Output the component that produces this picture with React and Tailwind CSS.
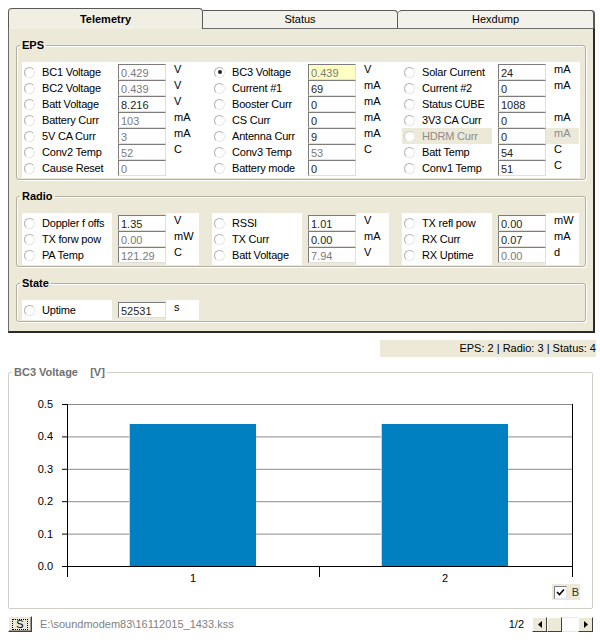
import React from "react";

const eps = [
  [
    { l: "BC1 Voltage", v: "0.429", u: "V" },
    { l: "BC2 Voltage", v: "0.439", u: "V" },
    { l: "Batt Voltage", v: "8.216", u: "V", d: true },
    { l: "Battery Curr", v: "103", u: "mA" },
    { l: "5V CA Curr", v: "3", u: "mA" },
    { l: "Conv2 Temp", v: "52", u: "C" },
    { l: "Cause Reset", v: "0", u: "" },
  ],
  [
    { l: "BC3 Voltage", v: "0.439", u: "V", checked: true, yellow: true },
    { l: "Current #1", v: "69", u: "mA", d: true },
    { l: "Booster Curr", v: "0", u: "mA", d: true },
    { l: "CS Curr", v: "0", u: "mA", d: true },
    { l: "Antenna Curr", v: "9", u: "mA", d: true },
    { l: "Conv3 Temp", v: "53", u: "C" },
    { l: "Battery mode", v: "0", u: "", d: true },
  ],
  [
    { l: "Solar Current", v: "24", u: "mA", d: true },
    { l: "Current #2", v: "0", u: "mA", d: true },
    { l: "Status CUBE", v: "1088", u: "", d: true },
    { l: "3V3 CA Curr", v: "0", u: "mA", d: true },
    { l: "HDRM Curr", v: "0", u: "mA", d: true, dis: true },
    { l: "Batt Temp", v: "54", u: "C", d: true },
    { l: "Conv1 Temp", v: "51", u: "C", d: true },
  ],
];

const radio = [
  [
    { l: "Doppler f offs", v: "1.35", u: "V", d: true },
    { l: "TX forw pow", v: "0.00", u: "mW" },
    { l: "PA Temp", v: "121.29", u: "C" },
  ],
  [
    { l: "RSSI", v: "1.01", u: "V", d: true },
    { l: "TX Curr", v: "0.00", u: "mA", d: true },
    { l: "Batt Voltage", v: "7.94", u: "V" },
  ],
  [
    { l: "TX refl pow", v: "0.00", u: "mW", d: true },
    { l: "RX Curr", v: "0.07", u: "mA", d: true },
    { l: "RX Uptime", v: "0.00", u: "d" },
  ],
];

const state = [[{ l: "Uptime", v: "52531", u: "s", d: true }]];

function Radio({ checked, dis }) {
  return (
    <span
      className={
        "w-[11px] h-[11px] rounded-full border bg-white shrink-0 flex items-center justify-center " +
        (dis
          ? "border-[#cdcdc4] border-r-[#ecebe4] border-b-[#ecebe4]"
          : "border-[#b0b0b0] border-r-[#e8e8e8] border-b-[#e8e8e8]")
      }
    >
      {checked && <span className="w-[4px] h-[4px] rounded-full bg-[#202020]" />}
    </span>
  );
}

function Col({ rows, blocks }) {
  return (
    <div className="flex w-[177px]">
      <div className={"w-[90px] flex flex-col py-[2px] " + (blocks ? "bg-white" : "")}>
        {rows.map((r, i) => (
          <div
            key={i}
            className={
              "h-[16px] flex items-center gap-[7px] pl-[2px] " +
              (r.dis ? "bg-[#ece9d8] text-[#8c8c8c]" : "text-black")
            }
          >
            <Radio checked={r.checked} dis={r.dis} />
            <span className="text-[11px] leading-[13px] tracking-[-0.2px] whitespace-nowrap">{r.l}</span>
          </div>
        ))}
      </div>
      <div className="w-[6px]" />
      <div className="w-[48px] flex flex-col py-[2px]">
        {rows.map((r, i) => (
          <div
            key={i}
            className={
              "h-[16px] w-[48px] border border-t-[#7c7c7c] border-l-[#7c7c7c] border-r-[#e2e0d6] border-b-[#e2e0d6] pl-[2px] pt-[2px] text-[11px] leading-[13px] overflow-hidden " +
              (r.yellow ? "bg-[#ffffc4] " : "bg-white ") +
              (r.d ? "text-[#1e1e1e]" : "text-[#7a7a7a]")
            }
          >
            {r.v}
          </div>
        ))}
      </div>
      <div className={"w-[33px] flex flex-col py-[2px] " + (blocks ? "bg-white" : "")}>
        {rows.map((r, i) => (
          <div
            key={i}
            className={
              "h-[16px] pl-[8px] text-[11px] leading-[10px] " +
              (r.dis ? "bg-[#ece9d8] text-[#8c8c8c]" : "text-black")
            }
          >
            {r.u}
          </div>
        ))}
      </div>
    </div>
  );
}

function Group({ title, children, className = "" }) {
  return (
    <fieldset
      className={
        "mx-[7px] border border-[#b2b0a2] rounded-[3px] shadow-[inset_1px_1px_0_#ffffff,1px_1px_0_#ffffff] pl-[5px] pr-[5px] pt-[10px] pb-[1px] " +
        className
      }
    >
      <legend className="ml-[-2px] px-[2px] text-[11px] leading-[13px] font-bold text-black">{title}</legend>
      {children}
    </fieldset>
  );
}

function Chart() {
  const gy = [25, 57.4, 89.8, 122.2, 154.6, 187];
  const labels = ["0.5", "0.4", "0.3", "0.2", "0.1", "0.0"];
  return (
    <svg width="583" height="205" className="block" fontFamily="Liberation Sans, Arial, sans-serif" fontSize="11">
      {gy.slice(0, 5).map((y, i) => (
        <line key={i} x1="58" x2="563" y1={y + 0.5} y2={y + 0.5} stroke="#8a8a8a" strokeWidth="1" />
      ))}
      <rect x="120" y="45" width="127" height="142" fill="#0080c0" />
      <line x1="120.5" x2="120.5" y1="45" y2="187" stroke="#b8dcef" />
      <rect x="372" y="45" width="127" height="142" fill="#0080c0" />
      <line x1="372.5" x2="372.5" y1="45" y2="187" stroke="#b8dcef" />
      <line x1="58" x2="564" y1="187.5" y2="187.5" stroke="#000" />
      <line x1="58.5" x2="58.5" y1="25" y2="198" stroke="#000" />
      <line x1="563.5" x2="563.5" y1="25" y2="198" stroke="#000" />
      <line x1="310.5" x2="310.5" y1="187" y2="198" stroke="#000" />
      {gy.map((y, i) => (
        <g key={i}>
          <line x1="53" x2="58" y1={y + 0.5} y2={y + 0.5} stroke="#000" />
          <text x="44" y={y + 4} textAnchor="end" fill="#000">
            {labels[i]}
          </text>
        </g>
      ))}
      <text x="184" y="203" textAnchor="middle" fill="#000">1</text>
      <text x="436" y="203" textAnchor="middle" fill="#000">2</text>
    </svg>
  );
}

export default function App() {
  return (
    <div className="w-[600px] h-[640px] bg-white pt-[8px] font-['Liberation_Sans',Arial,sans-serif] text-[11px] overflow-hidden">
      {/* Tab control */}
      <div className="ml-[8px] w-[587px]">
        <div className="flex h-[20px] items-end relative z-10">
          <div className="w-[195px] h-[21px] mb-[-1px] bg-[#f1efe4] border border-b-0 border-[#5a5a5a] rounded-t-[4px] flex items-center justify-center font-bold text-[11px] text-black">
            Telemetry
          </div>
          <div className="w-[195px] h-[18px] bg-[#f3f2ea] border border-b-0 border-l-0 border-[#5a5a5a] rounded-tr-[4px] flex items-center justify-center text-[11px] text-black">
            Status
          </div>
          <div className="w-[197px] h-[18px] bg-[#f3f2ea] border border-b-0 border-l-0 border-r-2 border-[#5a5a5a] rounded-t-[4px] flex items-center justify-center text-[11px] text-black">
            Hexdump
          </div>
        </div>
        <div className="bg-[#ece9d8] border-l border-t border-[#6c6c6c] border-r-2 border-r-[#2a2a2a] border-b-2 border-b-[#2a2a2a] pt-[10px] pb-[9px]">
          <Group title="EPS">
            <div className="bg-white flex gap-[13px]">
              {eps.map((c, i) => (
                <Col key={i} rows={c} />
              ))}
            </div>
          </Group>
          <Group title="Radio" className="mt-[10px]">
            <div className="flex gap-[13px]">
              {radio.map((c, i) => (
                <Col key={i} rows={c} blocks />
              ))}
            </div>
          </Group>
          <Group title="State" className="mt-[10px]">
            <div className="flex gap-[13px]">
              {state.map((c, i) => (
                <Col key={i} rows={c} blocks />
              ))}
            </div>
          </Group>
        </div>
      </div>

      {/* Status strip */}
      <div className="mt-[7px] ml-[380px] w-[216px] h-[17px] bg-[#ece9d8] flex items-center justify-end text-[11px] text-black whitespace-nowrap">
        EPS: 2 | Radio: 3 | Status: 4
      </div>

      {/* Chart */}
      <fieldset className="mt-[9px] ml-[8px] w-[585px] border border-[#cfcfc6] rounded-[2px] pb-[8px]">
        <legend className="ml-[3px] px-[2px] text-[11px] leading-[13px] font-bold text-[#707070] whitespace-pre">
          {"BC3 Voltage    [V]"}
        </legend>
        <Chart />
        <div className="flex justify-end pr-[12px] h-[16px]">
          <div className="bg-[#ece9d8] flex items-center gap-[5px] pl-[2px] pr-[1px] h-[16px]">
            <span className="w-[13px] h-[13px] border border-[#7c7c7c] border-r-[#e4e4e4] border-b-[#e4e4e4] bg-white flex items-center justify-center">
              <svg width="9" height="9" viewBox="0 0 9 9">
                <path d="M1 4 L3.5 6.5 L8 1.5" fill="none" stroke="#000" strokeWidth="1.6" />
              </svg>
            </span>
            <span className="text-[11px] leading-[13px] text-[#333]">B</span>
          </div>
        </div>
      </fieldset>

      {/* Bottom bar */}
      <div className="mt-[7px] ml-[8px] w-[585px] h-[16px] flex items-center">
        <div className="w-[24px] h-[16px] bg-[#ece9d8] border border-[#ffffff] border-r-[#404040] border-b-[#404040] shadow-[inset_-1px_-1px_0_#9c9a90] flex items-center justify-center">
          <span className="border border-dotted border-[#000] px-[3px] leading-[9px] text-[11px] text-black">S</span>
        </div>
        <span className="ml-[8px] text-[11px] text-[#7f7f7f]">E:\soundmodem83\16112015_1433.kss</span>
        <span className="ml-auto text-[11px] text-black">1/2</span>
        <div className="ml-[8px] flex h-[15px]">
          <div className="w-[15px] h-[15px] bg-[#ece9d8] border border-white border-r-[#404040] border-b-[#404040] flex items-center justify-center">
            <svg width="4" height="7" viewBox="0 0 4 7"><path d="M4 0 L0 3.5 L4 7 Z" fill="#000" /></svg>
          </div>
          <div className="w-[15px] h-[15px] bg-[#ece9d8] border border-white border-r-[#404040] border-b-[#404040]" />
          <div className="w-[16px] h-[15px] bg-white border-t border-b border-[#ece9d8]" />
          <div className="w-[15px] h-[15px] bg-[#ece9d8] border border-white border-r-[#404040] border-b-[#404040] flex items-center justify-center">
            <svg width="4" height="7" viewBox="0 0 4 7"><path d="M0 0 L4 3.5 L0 7 Z" fill="#000" /></svg>
          </div>
        </div>
      </div>
    </div>
  );
}
